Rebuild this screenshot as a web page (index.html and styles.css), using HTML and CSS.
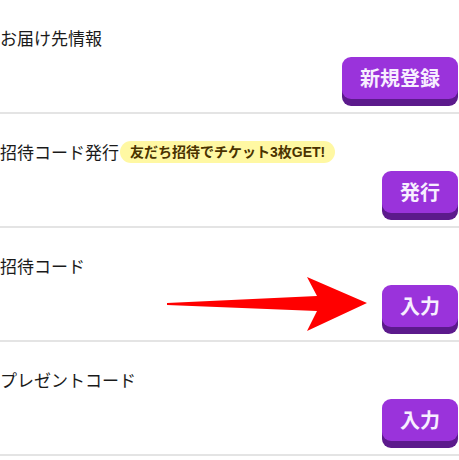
FILE: index.html
```html
<!DOCTYPE html>
<html lang="ja">
<head>
<meta charset="utf-8">
<link rel="stylesheet" href="styles.css">
</head>
<body>
<div class="list">
  <div class="row">
    <div class="title">お届け先情報</div>
    <div class="actions"><button class="btn">新規登録</button></div>
  </div>
  <div class="row">
    <div class="title">招待コード発行<span class="badge">友だち招待でチケット3枚GET!</span></div>
    <div class="actions"><button class="btn">発行</button></div>
  </div>
  <div class="row">
    <div class="title">招待コード</div>
    <div class="actions"><button class="btn">入力</button></div>
    <svg class="arrow" width="459" height="114" viewBox="0 0 459 114">
      <polygon points="167,75 317,68 307,49 367,75 307,103 317,83 167,77" fill="#ff0000"/>
    </svg>
  </div>
  <div class="row">
    <div class="title">プレゼントコード</div>
    <div class="actions"><button class="btn">入力</button></div>
  </div>
</div>
</body>
</html>
```
FILE: styles.css
```css
html, body {
  margin: 0;
  padding: 0;
  background: #ffffff;
}
body {
  font-family: "Noto Sans CJK JP", "Noto Sans", sans-serif;
  color: #1a1a1a;
}
.list {
  width: 459px;
}
.row {
  position: relative;
  height: 112px;
  box-sizing: content-box;
  border-bottom: 2px solid #e4e4e4;
  padding: 0 1px 0 0;
  display: flex;
  flex-direction: column;
}
.title {
  margin-top: 26px;
  height: 24px;
  line-height: 24px;
  font-size: 17px;
  display: flex;
  align-items: center;
  white-space: nowrap;
}
.badge {
  margin-left: 1px;
  height: 22px;
  line-height: 22px;
  padding: 0 10px;
  border-radius: 11px;
  background: #fff8a3;
  color: #4a3300;
  font-family: "Liberation Sans", "Noto Sans CJK JP", sans-serif;
  font-weight: bold;
  font-size: 14px;
}
.actions {
  margin-top: 7px;
  display: flex;
  justify-content: flex-end;
}
.btn {
  height: 42px;
  padding: 0 18px;
  border: none;
  border-radius: 9px;
  background: #9a33db;
  box-shadow: 0 7px 0 #5c1a8c;
  color: #f7efff;
  font-family: "Noto Sans CJK JP", sans-serif;
  font-weight: bold;
  font-size: 20px;
  line-height: 42px;
  cursor: pointer;
}
.arrow {
  position: absolute;
  left: 0;
  top: 0;
  pointer-events: none;
}
```
